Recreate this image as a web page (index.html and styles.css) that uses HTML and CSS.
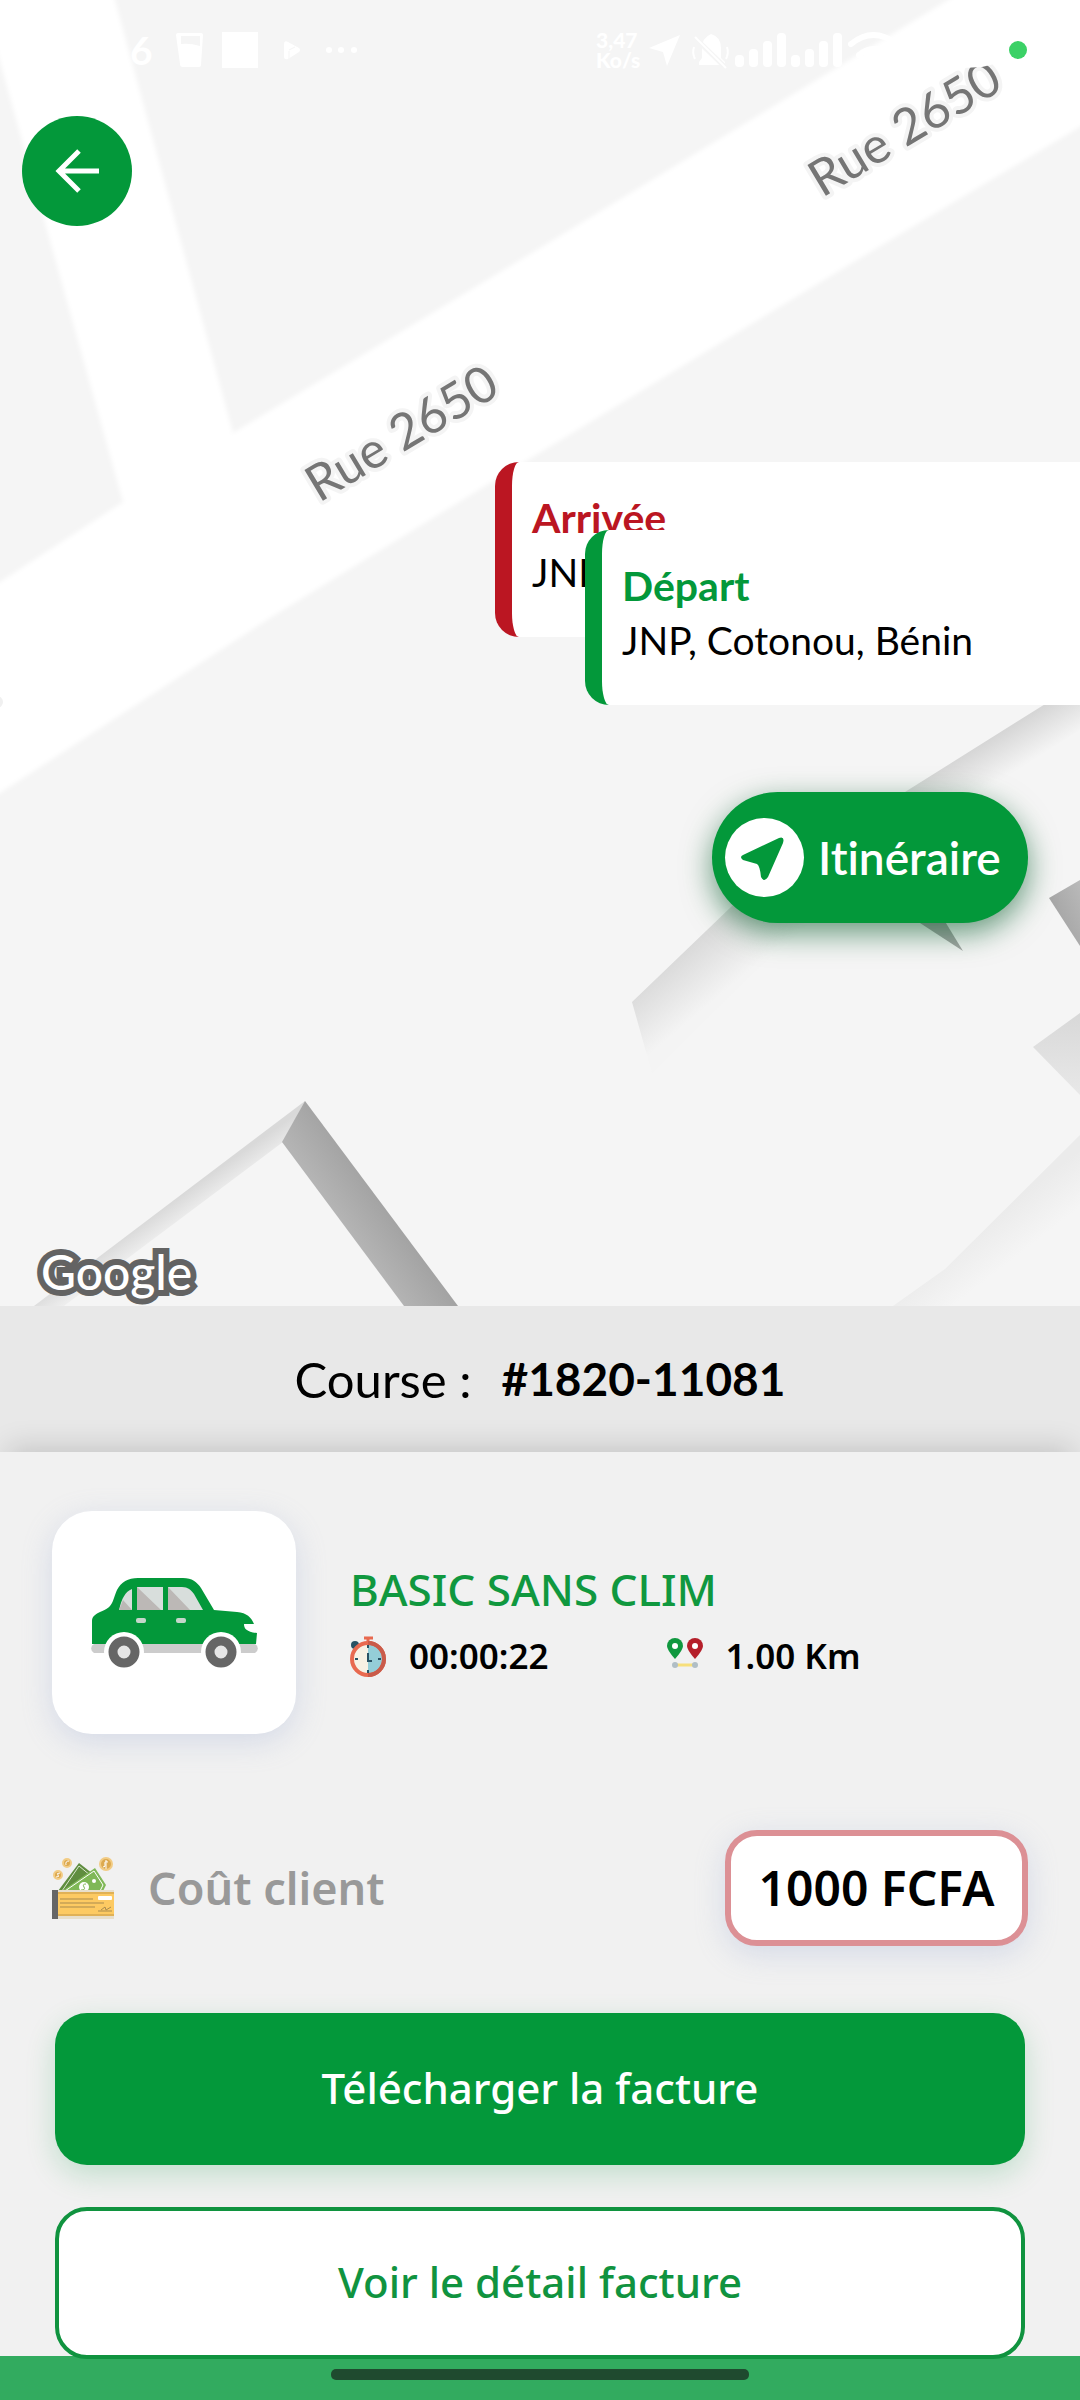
FILE: index.html
```html
<!DOCTYPE html>
<html lang="fr">
<head>
<meta charset="utf-8">
<meta name="viewport" content="width=device-width, initial-scale=1">
<title>Course #1820-11081</title>
<link rel="stylesheet" href="styles.css">
</head>
<body>
<main class="screen">
  <section class="map" aria-label="Carte">
    <svg class="map-tiles" viewBox="0 0 1080 1306" preserveAspectRatio="xMidYMax slice">
      <defs>
        <linearGradient id="roofA" gradientUnits="userSpaceOnUse" x1="974" y1="749" x2="994" y2="782"><stop offset="0" stop-color="#d6d6d6"/><stop offset="1" stop-color="#f4f4f4"/></linearGradient>
        <linearGradient id="roofB" gradientUnits="userSpaceOnUse" x1="682" y1="954" x2="718" y2="997"><stop offset="0" stop-color="#dadada"/><stop offset="1" stop-color="#f4f4f4"/></linearGradient>
        <linearGradient id="wallC" x1="0" y1="1" x2="1" y2="0"><stop offset="0" stop-color="#9c9c9c"/><stop offset="1" stop-color="#bababa"/></linearGradient>
        <linearGradient id="roofD" x1="0" y1="0" x2="0" y2="1"><stop offset="0" stop-color="#d8d8d8"/><stop offset="1" stop-color="#e8e8e8"/></linearGradient>
        <linearGradient id="roofE" gradientUnits="userSpaceOnUse" x1="1010" y1="1204" x2="1038" y2="1240"><stop offset="0" stop-color="#ebebeb"/><stop offset="1" stop-color="#f5f5f5"/></linearGradient>
        <linearGradient id="roofF" gradientUnits="userSpaceOnUse" x1="170" y1="1203" x2="187" y2="1227"><stop offset="0" stop-color="#d9d9d9"/><stop offset="1" stop-color="#f5f5f5"/></linearGradient>
        <linearGradient id="wallG" gradientUnits="userSpaceOnUse" x1="330" y1="1204" x2="372" y2="1174"><stop offset="0" stop-color="#b4b4b4"/><stop offset="1" stop-color="#a0a0a0"/></linearGradient>
        <filter id="soft"><feGaussianBlur stdDeviation="2"/></filter>
      </defs>
      <rect width="1080" height="1306" fill="#f5f5f5"/>
      <g fill="#fff" filter="url(#soft)">
        <path d="M-20 -30L-20 -10L123 502L233 433L104 -40Z"/>
        <path d="M-20 595L0 582L123 502L233 433L540 248L948 0L1100 -90V115L857 260L490 483L270 618L0 793L-20 806Z"/>
      </g>
      <path fill="url(#roofA)" d="M1042 706L905 792L840 836L900 850L960 806L1080 730V683Z"/>
      <path fill="url(#roofB)" d="M632 1002L732 906L800 850L860 880L764 963L652 1073Z"/>
      <path fill="#a5a5a5" d="M900 910L938 910L963 951Z"/>
      <path fill="url(#wallC)" d="M1080 880L1049 898L1080 946Z"/>
      <path fill="url(#roofD)" d="M1080 1013L1033 1047L1080 1095Z"/>
      <path fill="url(#roofE)" d="M1080 1135L945 1269L893 1306H960L1080 1214Z"/>
      <path fill="url(#roofF)" d="M34 1306L305 1101L283 1142L64 1306Z"/>
      <path fill="url(#wallG)" d="M305 1101L458 1306H404L282 1142Z"/>
      <g class="street">
        <text transform="translate(319 503) rotate(-31)">Rue 2650</text>
        <text transform="translate(822 198) rotate(-31)">Rue 2650</text>
        <circle class="street-edge" cx="-3" cy="702" r="4"/>
      </g>
      <path fill="#fff" d="M958 38h44v24l-20 5l-20 1z"/>
      <text class="google" x="41" y="1290">Google</text>
    </svg>

    <header class="status">
      <span class="clock">6</span>
      <svg class="status-left" viewBox="172 28 190 44" width="190" height="44" fill="#fff">
        <path fill-rule="evenodd" d="M180 33h21q2 0 2 2l-2 30q0 2-2 2h-16q-3 0-3-3l-4-29q0-2 2-2zm1 3v8q9-1 19 2v-10z"/>
        <rect x="222" y="32" width="36" height="36"/>
        <path d="M284 44q0-4 4-2l11 6q2 2 0 4l-11 7q-4 1-4-2z"/><path d="M289 50l6-3M289 51v8" stroke="#f5f5f5" stroke-width="1"/>
        <circle cx="329" cy="50" r="3"/><circle cx="341" cy="50" r="3"/><circle cx="354" cy="50" r="3"/>
      </svg>
      <span class="speed">3,47<br>Ko/s</span>
      <svg class="status-right" viewBox="648 28 260 44" width="260" height="44" fill="#fff">
        <path d="M649 48L680 35L667 66L663 52Z"/>
        <path d="M711 34q10 3 10 14v10l4 4v3h-26v-3l3-4v-10q0-10 9-14z"/><path d="M694 47q-2 6 1 12M727 47q2 6-1 12" fill="none" stroke="#fff" stroke-width="2"/><path d="M694 37l32 31" stroke="#f5f5f5" stroke-width="5"/><path d="M695 37l31 31" stroke="#fff" stroke-width="2"/>
        <rect x="735" y="55" width="9" height="12" rx="4"/><rect x="749" y="49" width="9" height="18" rx="4"/><rect x="763" y="41" width="9" height="26" rx="4"/><rect x="777" y="33" width="9" height="34" rx="4"/>
        <rect x="791" y="55" width="9" height="12" rx="4"/><rect x="805" y="49" width="9" height="18" rx="4"/><rect x="819" y="41" width="9" height="26" rx="4"/><rect x="833" y="33" width="9" height="34" rx="4"/>
        <path d="M851 44q22-18 46 0M859 55q14-12 30 0" fill="none" stroke="#fff" stroke-width="6" stroke-linecap="round"/>
      </svg>
      <span class="live"></span>
    </header>

    <button class="back" type="button" aria-label="Retour">
      <svg viewBox="0 0 110 110" width="110" height="110" fill="none" stroke="#fff" stroke-width="5"><path d="M77 55H36M57 35L37 55L57 75"/></svg>
    </button>

    <div class="pin pin-end"><strong>Arrivée</strong><span>JNP, Cotonou, Bénin</span></div>
    <div class="pin pin-start"><strong>Départ</strong><span>JNP, Cotonou, Bénin</span></div>

    <button class="route" type="button">
      <span class="route-icon"><svg viewBox="0 0 79 79" width="79" height="79" fill="#03983a"><path d="M18 37L54 20Q60 18 58 25L43 59Q39 65 36 59Q35 48 32 46L18 42Q14 39 18 37Z"/></svg></span>
      Itinéraire
    </button>
  </section>

  <h1 class="course">Course : <strong>#1820-11081</strong></h1>

  <section class="panel">
    <div class="ride">
      <div class="car">
        <svg viewBox="0 0 171 90" width="171" height="90">
          <path fill="#ccc" d="M5 66H166a5 5 0 0 1 0 9H5a5 5 0 0 1 0-9z"/>
          <path fill="#03983a" d="M3 66V43C3 38 7 36 11 34C25 29 23 23 28 12C32 4 39 0 49 0H94C103 0 108 4 112 10L125 32L148 34C158 35 162 39 165 46H155C155 51 158 54 168 55L167 66Z"/>
          <path fill="#d8dedc" d="M30 32C33 20 36 14 43 11V32zM48 9H74V32H48zM79 9H93C99 9 102 12 105 16L114 32H79z"/>
          <path fill="#bcb8b6" d="M30 32L34 22L43 32zM48 9L72 32H48zM79 9L101 32H79z"/>
          <rect x="47" y="40" width="10" height="5" rx="2" fill="#c5d6ca"/><rect x="87" y="40" width="10" height="5" rx="2" fill="#c5d6ca"/>
          <circle cx="35" cy="74" r="20" fill="#fff"/><circle cx="132" cy="74" r="20" fill="#fff"/>
          <circle cx="35" cy="74" r="11" fill="#e6e6e6" stroke="#666" stroke-width="9"/><circle cx="132" cy="74" r="11" fill="#e6e6e6" stroke="#666" stroke-width="9"/>
        </svg>
      </div>
      <div class="ride-info">
        <h2>BASIC SANS CLIM</h2>
        <div class="stats">
          <span class="stat">
            <svg viewBox="0 0 37 41" width="37" height="41"><circle cx="5" cy="9" r="4" fill="#285264"/><path d="M14 2h9M18 1v6" stroke="#e8694f" stroke-width="3"/><circle cx="18" cy="23" r="16" fill="#f7f1e4"/><path fill="#94ced8" d="M18 7a16 16 0 0 1 0 32z"/><circle cx="18" cy="23" r="16" fill="none" stroke="#e8694f" stroke-width="4"/><path d="M18 7a16 16 0 0 1 0 32" fill="none" stroke="#c95b4a" stroke-width="4"/><path d="M18 17v8h4M18 9v3M18 34v3M5 23h3M28 23h3" fill="none" stroke="#285264" stroke-width="2"/></svg>
            00:00:22
          </span>
          <span class="stat">
            <svg viewBox="0 0 36 37" width="36" height="37"><path d="M8 27h20" stroke="#f7df7b" stroke-width="3"/><circle cx="8" cy="27" r="3" fill="#b0bec5"/><circle cx="28" cy="27" r="3" fill="#b0bec5"/><path fill="#10983f" d="M8 0a8 8 0 0 1 8 8q0 4-8 13Q0 12 0 8a8 8 0 0 1 8-8z"/><path fill="#b51f2a" d="M28 0a8 8 0 0 1 8 8q0 4-8 13q-8-9-8-13a8 8 0 0 1 8-8z"/><circle cx="8" cy="8" r="3" fill="#fff"/><circle cx="28" cy="8" r="3" fill="#fff"/></svg>
            1.00 Km
          </span>
        </div>
      </div>
    </div>

    <div class="cost">
      <svg viewBox="0 0 62 62" width="62" height="62">
        <g fill="#dca94f" stroke="#f2cc85" stroke-width="2"><circle cx="15" cy="6" r="4"/><circle cx="6" cy="18" r="4"/><circle cx="54" cy="7" r="6"/></g>
        <path d="M17 4q-4 0-3 4M8 16q-4 0-2 2t-2 2M56 5q-4-1-3 2t-2 3M54 3v9" fill="none" stroke="#fff" stroke-width="1"/>
        <path fill="#5f8d3f" d="M6 34L27 6L50 24L40 36z"/><path d="M10 34L27 9L44 23" fill="none" stroke="#dbe8d0" stroke-width="1"/>
        <path fill="#7fb857" d="M10 34L43 11L54 28L50 36z"/><path d="M13 34L42 14L51 28L48 34" fill="none" stroke="#fff" stroke-width="1"/><circle cx="32" cy="30" r="5" fill="#fff"/><path d="M34 27q-4 0-2 3t-3 3" fill="none" stroke="#7fb857" stroke-width="1"/><circle cx="42" cy="24" r="2" fill="#fff"/>
        <path fill="#e8dfcb" d="M6 33h56v29H6z"/><path fill="#fdca62" d="M6 35h56v23H6z"/><path fill="#666" d="M0 33h6v29H0z"/>
        <path d="M6 36h56M6 58h56" stroke="#e0b156" stroke-width="2"/><path d="M8 42h33M8 46h44M8 50h35M46 54h14M49 53l4-3l1 3l5-3" fill="none" stroke="#a98b4f" stroke-width="1"/><rect x="46" y="39" width="14" height="4" rx="1" fill="#fff"/>
      </svg>
      <span class="cost-label">Coût client</span>
      <output class="price">1000 FCFA</output>
    </div>

    <div class="actions">
      <button class="btn btn-fill" type="button">Télécharger la facture</button>
      <button class="btn btn-line" type="button">Voir le détail facture</button>
    </div>
  </section>
  <footer class="nav"><span class="handle"></span></footer>
</main>
</body>
</html>
```
FILE: styles.css
```css
* { box-sizing: border-box; }

body {
  margin: 0;
  background: #f1f1f1;
  color: #000;
  font-family: Lato, "Open Sans", sans-serif;
}

button {
  border: 0;
  padding: 0;
  font: inherit;
}

svg { display: block; flex: none; }

.screen {
  display: flex;
  flex-direction: column;
  min-height: 100vh;
}

/* Map */
.map {
  position: relative;
  flex: 1;
  min-height: 960px;
  overflow: hidden;
  background: #f5f5f5;
}

.map-tiles {
  position: absolute;
  inset: 0;
  width: 100%;
  height: 100%;
}

.street text {
  font: 400 50px Lato, sans-serif;
  fill: #757575;
  stroke: #f4f4f4;
  stroke-width: 8px;
  stroke-linejoin: round;
  paint-order: stroke;
}

.street-edge { fill: #757575; stroke: #f0f0f0; stroke-width: 4px; }

.google {
  font: 500 48px Lato, sans-serif;
  fill: #fff;
  stroke: #636363;
  stroke-width: 12px;
  paint-order: stroke;
}

.status {
  position: absolute;
  inset: 28px 53px auto 130px;
  display: flex;
  align-items: center;
  height: 44px;
  color: #fff;
}

.clock { width: 42px; font-size: 39px; font-weight: 700; line-height: 44px; }
.speed { margin-left: auto; width: 52px; font-size: 21px; font-weight: 900; line-height: 20px; }
.live { width: 18px; height: 18px; margin-left: 101px; border-radius: 50%; background: #3bd166; }

.back {
  position: absolute;
  left: 22px;
  top: 116px;
  width: 110px;
  height: 110px;
  border-radius: 50%;
  background: #03983a;
}

.pin {
  position: absolute;
  right: -24px;
  display: flex;
  flex-direction: column;
  height: 175px;
  padding: 28px 20px;
  border-left: 17px solid;
  border-radius: 24px;
  background: #fff;
  font-size: 39px;
  line-height: 55px;
  white-space: nowrap;
}

.pin strong { font-size: 41px; }
.pin span { color: #000; }
.pin-end { left: 495px; top: 462px; border-color: #bb1622; color: #bb1622; }
.pin-start { left: 585px; top: 530px; border-color: #03983a; color: #03983a; }

.route {
  position: absolute;
  right: 52px;
  top: 792px;
  display: flex;
  align-items: center;
  gap: 14px;
  width: 316px;
  height: 131px;
  padding-left: 13px;
  border-radius: 66px;
  background: #03983a;
  box-shadow: 0 10px 30px rgba(3, 90, 40, 0.6);
  color: #fff;
  font-size: 46px;
  font-weight: 600;
  font-variant-ligatures: none;
}

.route-icon { flex: none; border-radius: 50%; background: #fff; }

/* Course number */
.course {
  display: flex;
  align-items: center;
  justify-content: center;
  gap: 30px;
  margin: 0;
  background: #e8e8e8;
  font-size: 49px;
  font-weight: 400;
  line-height: 146px;
}

.course strong { font-size: 46px; font-weight: 700; }

/* Details */
.panel {
  position: relative;
  padding: 59px 52px 0;
  background: #f1f1f1;
  box-shadow: 0 -12px 28px -8px rgba(0, 0, 0, 0.16);
  font-family: "Noto Sans", "Open Sans", sans-serif;
}

.ride { display: flex; align-items: center; gap: 54px; }

.car {
  display: grid;
  place-items: center;
  width: 244px;
  height: 223px;
  border-radius: 40px;
  background: #fff;
  box-shadow: 0 8px 30px rgba(150, 165, 210, 0.3);
}

.ride-info { display: grid; gap: 11px; }
.ride-info h2 { margin: 0; color: #10983f; font-size: 44px; font-weight: 500; line-height: 56px; }
.stats { display: flex; gap: 119px; font-size: 35px; font-weight: 600; line-height: 56px; white-space: nowrap; }
.stat { display: flex; align-items: center; gap: 22px; }

.cost { display: flex; align-items: center; margin-top: 96px; }
.cost-label { margin-left: 34px; color: #999; font-size: 45px; font-weight: 600; line-height: 56px; }

.price {
  margin-left: auto;
  width: 303px;
  border: 6px solid #dc9095;
  border-radius: 32px;
  background: #fff;
  box-shadow: 0 8px 30px rgba(150, 165, 210, 0.3);
  font-size: 48px;
  font-weight: 600;
  line-height: 104px;
  text-align: center;
}

.actions { display: grid; gap: 42px; margin-top: 67px; padding: 0 3px; }

.btn {
  height: 152px;
  padding-bottom: 4px;
  border-radius: 32px;
  font-size: 42px;
  font-weight: 500;
}

.btn-fill { background: #03983a; color: #fff; box-shadow: 0 10px 30px rgba(3, 152, 58, 0.2); }
.btn-line { position: relative; z-index: 1; border: 4px solid #10933f; background: #fff; color: #10933f; }

.nav {
  position: relative;
  display: grid;
  place-items: center;
  height: 44px;
  margin-top: -3px;
  padding-bottom: 8px;
  background: #32ab5f;
}

.handle { width: 38.7%; height: 11px; border-radius: 5px; background: #1f4a2f; }
```
